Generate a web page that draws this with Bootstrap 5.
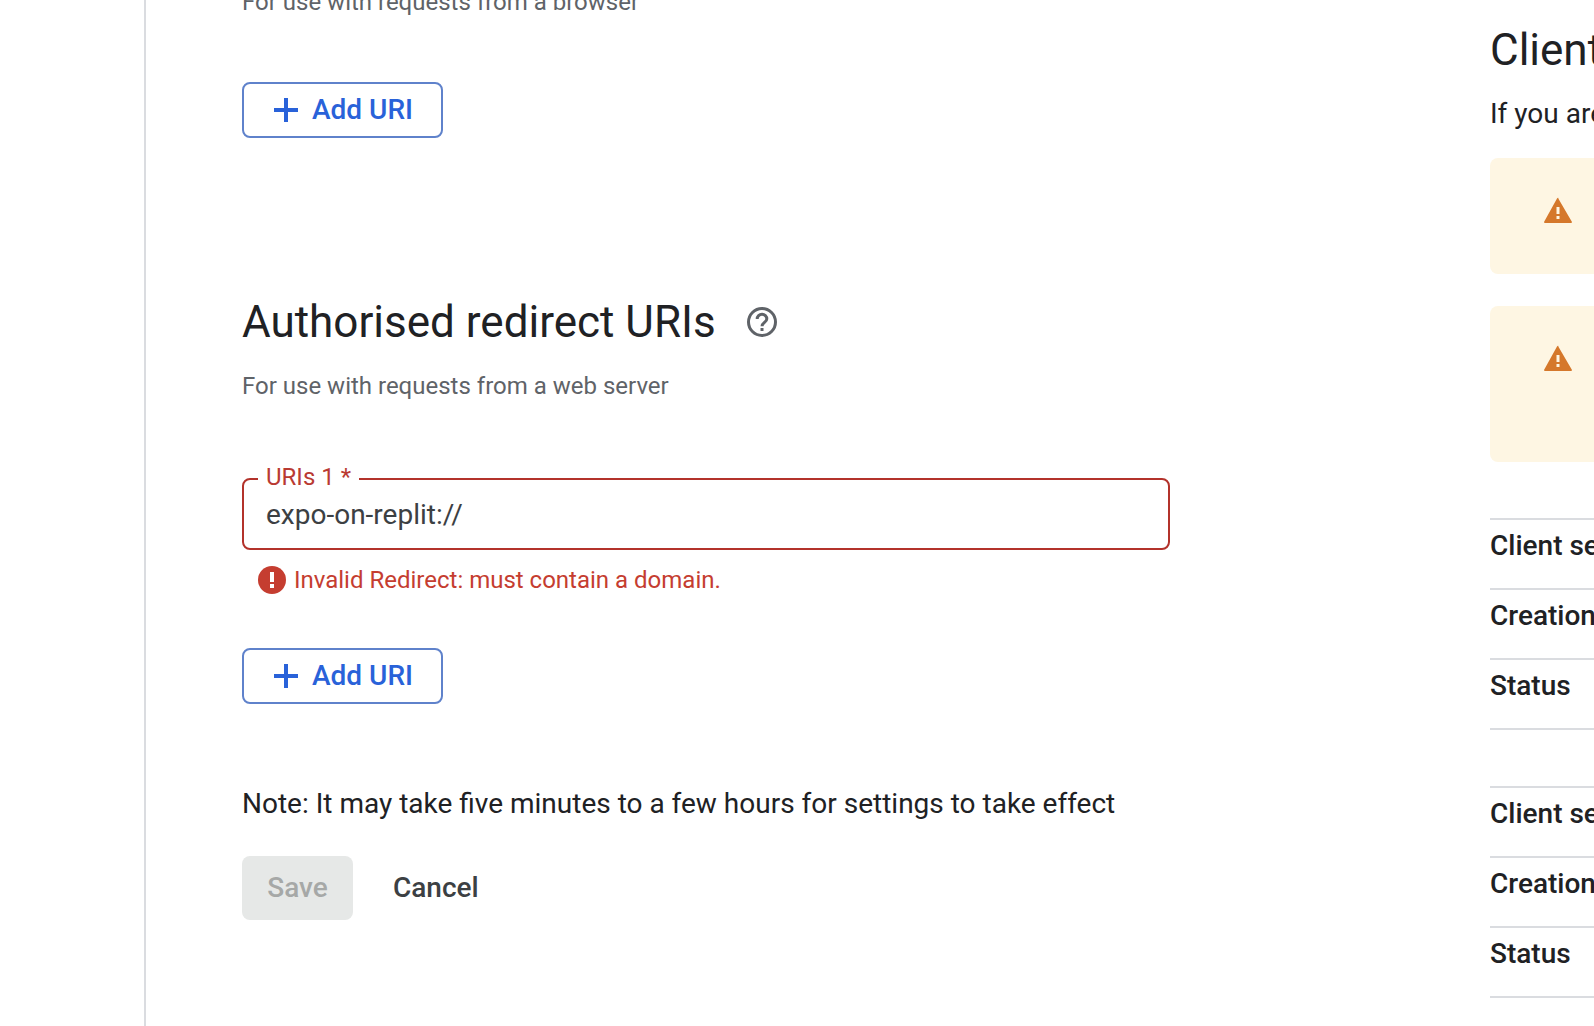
<!DOCTYPE html>
<html lang="en-GB">
<head>
<meta charset="utf-8">
<meta name="viewport" content="width=device-width, initial-scale=1">
<title>Client settings</title>
<link href="https://cdn.jsdelivr.net/npm/bootstrap@5.3.0/dist/css/bootstrap.min.css" rel="stylesheet">
<style>
  body { font: 28px/40px Roboto, sans-serif; color: #202124; background: #fff; }
  .page-shell { height: 100vh; }
  .nav-gutter { flex: 0 0 144px; }
  .form-pane { border-left: 2px solid #dadce0; padding-left: 96px; padding-right: 96px; min-width: 0; }
  .client-form { max-width: 928px; margin-top: -14px; }
  .info-pane { flex: 0 0 104px; white-space: nowrap; padding-top: 22px; }
  .pane-title { font: 400 44px/56px Roboto, sans-serif; margin: 0; }
  .hint-text { font-size: 24px; line-height: 32px; color: #5f6368; margin: 0; }
  .uri-btn { --bs-btn-color: #2962d9; --bs-btn-border-color: #5f82cb; --bs-btn-hover-color: #2962d9; --bs-btn-hover-bg: #f1f5fe; --bs-btn-hover-border-color: #5f82cb;
    height: 56px; min-width: 201px; border-width: 2px; border-radius: 8px; padding: 0 24px 0 30px; font-size: 28px; font-weight: 500; line-height: 40px; gap: 14px; }
  .origin-add { margin-top: 64px; }
  .redirect-add { margin-top: 52px; }
  .redirect-section { margin-top: 156px; }
  .title-row { gap: 30px; margin-bottom: 20px; }
  .help-btn { color: #5f6368; line-height: 0; }
  .uri-field { border: 2px solid #b3322b; border-radius: 8px; height: 72px; margin: 76px 0 0; padding: 0 22px; }
  .uri-label { position: absolute; top: -19px; left: 14px; padding: 0 8px; background: #fff; color: #b93a32; font-size: 24px; line-height: 32px; }
  .uri-input, .uri-input:focus { font-size: 28px; line-height: 40px; color: #3c4043; border: 0; padding: 0; box-shadow: none; background: transparent; height: 68px; }
  .error-line { color: #c53d30; font-size: 24px; line-height: 32px; gap: 8px; margin: 14px 0 0 16px; }
  .note-line { margin: 80px 0 0; }
  .form-action { height: 64px; min-width: 111px; border: 0; border-radius: 8px; padding: 0 24px; font-size: 28px; font-weight: 500; line-height: 40px; }
  .save-btn, .save-btn:disabled { background: #e6e8e7; color: #a6a8a7; opacity: 1; }
  .cancel-btn { color: #3c4043; }
  .warn-panel { background: #fef6e3; border-radius: 8px 0 0 8px; padding: 36px 0 0 52px; line-height: 0; }
  .warn-short { height: 116px; margin-bottom: 32px; }
  .warn-tall { height: 156px; margin-bottom: 56px; }
  .secret-table { border-bottom: 2px solid #dadce0; margin: 0 0 56px; font-weight: 500; width: 100%; table-layout: fixed; }
  .secret-table th { border-top: 2px solid #dadce0; font-weight: 500; height: 70px; padding: 6px 0 22px; overflow: hidden; }
</style>
<script src="https://cdn.jsdelivr.net/npm/bootstrap@5.3.0/dist/js/bootstrap.bundle.min.js"></script>
</head>
<body>
<div class="page-shell d-flex overflow-hidden">
  <div class="nav-gutter"></div>
  <main class="form-pane flex-grow-1">
    <form class="client-form">
      <p class="hint-text">For use with requests from a browser</p>
      <button type="button" class="uri-btn origin-add btn d-inline-flex align-items-center">
        <svg width="24" height="24" viewBox="0 0 24 24" aria-hidden="true"><path d="M10 0h4v10h10v4H14v10h-4V14H0v-4h10z" fill="currentColor"/></svg>
        Add URI
      </button>
      <section class="redirect-section">
        <div class="title-row d-flex align-items-center">
          <h2 class="pane-title">Authorised redirect URIs</h2>
          <button type="button" class="help-btn btn p-0 border-0" aria-label="Help">
            <svg width="32" height="32" viewBox="0 0 32 32" fill="none" stroke="currentColor" stroke-width="3"><circle cx="16" cy="16" r="13.5"/><path d="M11.2 13a4.8 4.8 0 1 1 9.6 0c0 3.2-4.8 3.6-4.8 7.2"/><path d="M14.5 23.5h3" /></svg>
          </button>
        </div>
        <p class="hint-text">For use with requests from a web server</p>
        <div class="uri-field position-relative">
          <label class="uri-label" for="uri1">URIs 1 *</label>
          <input class="uri-input form-control" id="uri1" type="text" value="expo-on-replit://" aria-describedby="uri1-error">
        </div>
        <div class="error-line d-flex align-items-center" id="uri1-error">
          <svg width="28" height="28" viewBox="0 0 28 28" aria-hidden="true"><circle cx="14" cy="14" r="14" fill="currentColor"/><path d="M12 6h4v10h-4zM12 18h4v4h-4z" fill="#fff"/></svg>
          <span>Invalid Redirect: must contain a domain.</span>
        </div>
        <button type="button" class="uri-btn redirect-add btn d-inline-flex align-items-center">
          <svg width="24" height="24" viewBox="0 0 24 24" aria-hidden="true"><path d="M10 0h4v10h10v4H14v10h-4V14H0v-4h10z" fill="currentColor"/></svg>
          Add URI
        </button>
      </section>
      <p class="note-line">Note: It may take five minutes to a few hours for settings to take effect</p>
      <div class="d-flex gap-3 mt-4 pt-2">
        <button type="submit" class="form-action save-btn btn" disabled>Save</button>
        <button type="button" class="form-action cancel-btn btn">Cancel</button>
      </div>
    </form>
  </main>
  <aside class="info-pane overflow-hidden">
    <h2 class="pane-title">Client secrets</h2>
    <p class="mt-3 mb-4">If you are</p>
    <div class="warn-panel warn-short">
      <svg width="32" height="32" viewBox="0 0 32 32" aria-hidden="true"><path d="M16 4 30 28Q30 29 29 29H3Q2 29 2 28L15 4.500Q16 3 17 4.500Z" fill="#d5782b"/><path d="M14.500 13h3v7h-3zM14.500 22h3v3h-3z" fill="#fef6e3"/></svg>
    </div>
    <div class="warn-panel warn-tall">
      <svg width="32" height="32" viewBox="0 0 32 32" aria-hidden="true"><path d="M16 4 30 28Q30 29 29 29H3Q2 29 2 28L15 4.500Q16 3 17 4.500Z" fill="#d5782b"/><path d="M14.500 13h3v7h-3zM14.500 22h3v3h-3z" fill="#fef6e3"/></svg>
    </div>
    <table class="secret-table"><tbody>
      <tr><th scope="row">Client secret</th></tr>
      <tr><th scope="row">Creation</th></tr>
      <tr><th scope="row">Status</th></tr>
    </tbody></table>
    <table class="secret-table"><tbody>
      <tr><th scope="row">Client secret</th></tr>
      <tr><th scope="row">Creation</th></tr>
      <tr><th scope="row">Status</th></tr>
    </tbody></table>
  </aside>
</div>
</body>
</html>
